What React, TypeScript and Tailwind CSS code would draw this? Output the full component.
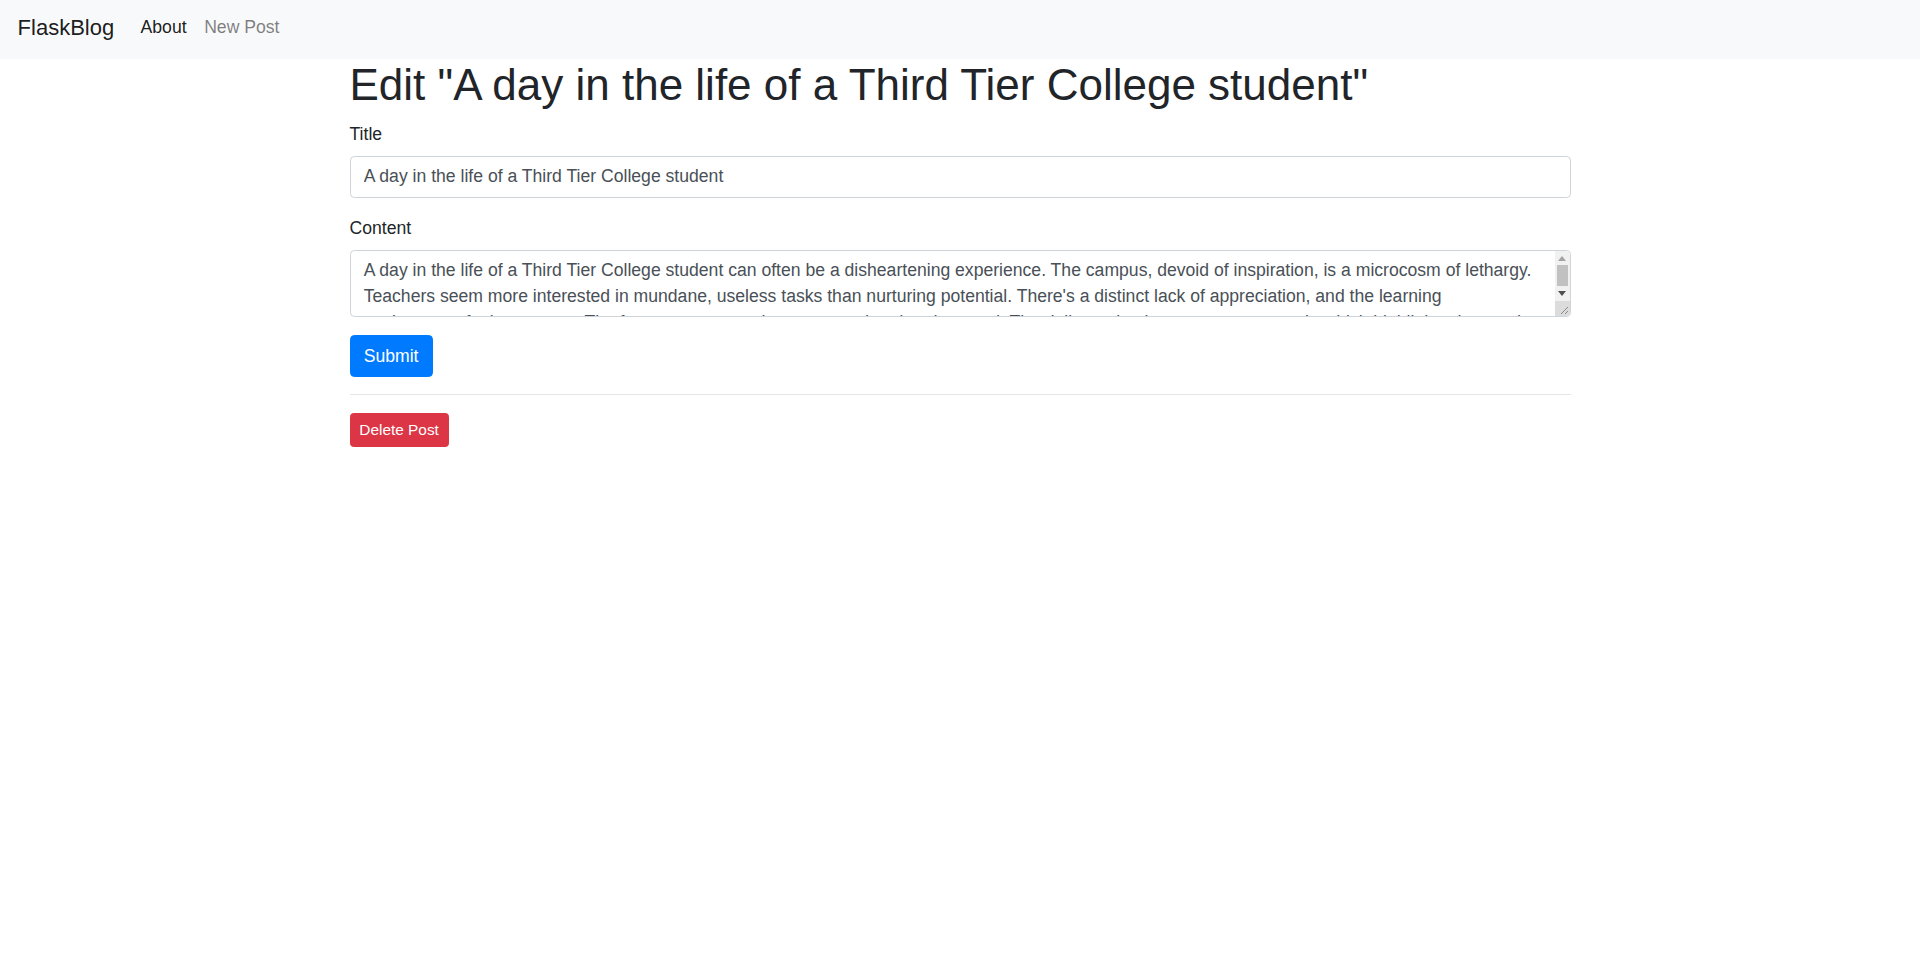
import React from 'react';

const postTitle = 'A day in the life of a Third Tier College student';

const postContent =
  "A day in the life of a Third Tier College student can often be a disheartening experience. The campus, devoid of inspiration, is a microcosm of lethargy. Teachers seem more interested in mundane, useless tasks than nurturing potential. There's a distinct lack of appreciation, and the learning environment feels stagnant. The few resources we have are outdated and unused. The daily routine is a monotonous cycle which highlights the need for change. Students drift from one lecture to another, counting the hours until the day is over.";

function Navbar() {
  return (
    <nav className="flex h-[59px] items-center bg-[#f8f9fa] px-[17.6px] pb-[4px]">
      <a href="#" className="mr-[17.6px] text-[22px] leading-[33px] text-[rgba(0,0,0,0.9)]">
        FlaskBlog
      </a>
      <ul className="flex">
        <li>
          <a href="#" className="block px-[8.8px] text-[17.6px] leading-[26.4px] text-[rgba(0,0,0,0.9)]">
            About
          </a>
        </li>
        <li>
          <a href="#" className="block px-[8.8px] text-[17.6px] leading-[26.4px] text-[rgba(0,0,0,0.5)]">
            New Post
          </a>
        </li>
      </ul>
    </nav>
  );
}

// the textarea's scrollbar, drawn over its right edge
function FakeScrollbar() {
  return (
    <div className="pointer-events-none absolute top-[1px] right-[1px] bottom-[1px] flex w-[15px] flex-col bg-[#f1f1f1] rounded-tr-[3.4px] rounded-br-[3.4px] overflow-hidden">
      <div className="flex h-[14px] items-center justify-center">
        <svg width="8" height="5" viewBox="0 0 8 5">
          <path d="M4 0 L8 5 L0 5 Z" fill="#a3a3a3" />
        </svg>
      </div>
      <div className="mx-[2px] h-[21px] bg-[#c1c1c1]" />
      <div className="flex h-[15px] items-center justify-center">
        <svg width="8" height="5" viewBox="0 0 8 5">
          <path d="M0 0 L8 0 L4 5 Z" fill="#505050" />
        </svg>
      </div>
      <div className="flex flex-1 items-end justify-end bg-[#dcdcdc] p-[2px]">
        <svg width="8" height="8" viewBox="0 0 8 8">
          <path d="M8 1 L1 8 M8 5 L5 8" stroke="#8a8a8a" strokeWidth="1" />
        </svg>
      </div>
    </div>
  );
}

export default function App() {
  return (
    <div className="min-h-screen bg-white font-['Liberation_Sans',Arial,sans-serif] text-[17.6px] leading-[26.4px] text-[#212529]">
      <Navbar />
      <div className="mx-auto max-w-[1254px] px-[16.5px]">
        <h1 className="mb-[8.8px] text-[44px] leading-[52.8px] font-normal">Edit "{postTitle}"</h1>

        <form onSubmit={(e) => e.preventDefault()}>
          <div className="mb-[17.6px]">
            <label htmlFor="title" className="mb-[8.8px] inline-block">
              Title
            </label>
            <input
              id="title"
              type="text"
              defaultValue={postTitle}
              className="block h-[41.8px] w-full rounded-[4.4px] border border-[#ced4da] bg-white px-[13.2px] py-[6.6px] text-[17.6px] leading-[26.4px] text-[#495057] outline-none"
            />
          </div>

          <div className="mb-[17.6px]">
            <label htmlFor="content" className="mb-[8.8px] inline-block">
              Content
            </label>
            <div className="relative">
              <textarea
                id="content"
                defaultValue={postContent}
                className="block h-[67px] w-full resize-none overflow-hidden rounded-[4.4px] border border-[#ced4da] bg-white pt-[6.8px] pb-[6.6px] pl-[13.2px] pr-[28.2px] text-[17.6px] leading-[25.7px] text-[#495057] outline-none"
              />
              <FakeScrollbar />
            </div>
          </div>

          <button
            type="submit"
            className="rounded-[4.4px] border border-[#007bff] bg-[#007bff] px-[13.2px] py-[6.6px] text-[17.6px] leading-[26.4px] text-white"
          >
            Submit
          </button>
        </form>

        <hr className="my-[17.6px] border-t border-[rgba(0,0,0,0.1)]" />

        <button
          type="button"
          className="rounded-[3.5px] border border-[#dc3545] bg-[#dc3545] px-[8.8px] py-[4.4px] text-[15.4px] leading-[23.1px] text-white"
        >
          Delete Post
        </button>
      </div>
    </div>
  );
}
